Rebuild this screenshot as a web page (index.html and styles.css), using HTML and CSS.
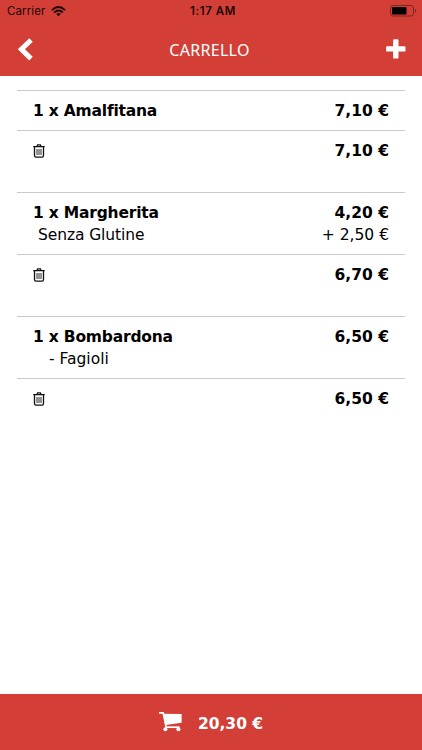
FILE: index.html
```html
<!DOCTYPE html>
<html lang="it">
<head>
    <meta charset="UTF-8">
    <meta name="viewport" content="width=device-width, initial-scale=1.0">
    <title>Carrello</title>
    <link rel="stylesheet" href="styles.css">
</head>
<body>

    <!-- Trash icon, used once per cart item -->
    <svg class="sprite" width="0" height="0">
        <symbol id="trash" viewBox="0 0 12 14">
            <path d="M0.3 2.6H11.7M3.9 2.4L4.6 0.8H7.4L8.1 2.4" fill="none" stroke="#111" stroke-width="1.3"/>
            <path d="M1.5 3V11.6Q1.5 13.2 3 13.2H9Q10.5 13.2 10.5 11.6V3" fill="none" stroke="#111" stroke-width="1.3"/>
            <path d="M4 5V11M6 5V11M8 5V11" stroke="#111" stroke-width="0.9"/>
        </symbol>
    </svg>

    <header>
        <div class="status-bar">
            <div class="carrier">
                <span>Carrier</span>
                <svg width="15" height="11" viewBox="0 0 15 11" fill="none" stroke="#1c0605" stroke-width="1.9">
                    <path d="M0.9 4.1Q7.5 -1.9 14.1 4.1"/>
                    <path d="M3.2 6.5Q7.5 2.7 11.8 6.5"/>
                    <path d="M7.5 10.2L5.2 7.9Q7.5 6.2 9.8 7.9Z" fill="#1c0605" stroke="none"/>
                </svg>
            </div>
            <div class="time">1:17 AM</div>
            <svg class="battery" width="27" height="12" viewBox="0 0 27 12">
                <rect x="0.5" y="0.5" width="23" height="10.5" rx="2.5" fill="none" stroke="#7d2521"/>
                <rect x="2" y="2" width="14.5" height="7.5" rx="0.8" fill="#000"/>
                <path d="M25 4V7.8Q26.3 7.2 26.3 5.9T25 4Z" fill="#7d2521"/>
            </svg>
        </div>
        <div class="nav-bar">
            <button class="back">
                <svg width="15" height="23" viewBox="0 0 15 23">
                    <path d="M13 2L3.4 11.3L13 20.6" fill="none" stroke="#fff" stroke-width="5"/>
                </svg>
            </button>
            <h1>CARRELLO</h1>
            <button class="add">
                <svg width="20" height="20" viewBox="0 0 20 20" fill="#fff">
                    <rect x="7.1" y="0.2" width="5.4" height="19.4" rx="1.2"/>
                    <rect x="0.1" y="7.2" width="19.4" height="5.4" rx="1.2"/>
                </svg>
            </button>
        </div>
    </header>

    <main>
        <section class="item">
            <div class="details">
                <div class="row bold"><span class="name">1 x Amalfitana</span><span>7,10 €</span></div>
            </div>
            <div class="total row bold">
                <svg class="trash" width="12" height="14"><use href="#trash"/></svg>
                <span>7,10 €</span>
            </div>
        </section>

        <section class="item">
            <div class="details">
                <div class="row bold"><span class="name">1 x Margherita</span><span>4,20 €</span></div>
                <div class="row extra"><span class="variant">Senza Glutine</span><span>+ 2,50 €</span></div>
            </div>
            <div class="total row bold">
                <svg class="trash" width="12" height="14"><use href="#trash"/></svg>
                <span>6,70 €</span>
            </div>
        </section>

        <section class="item">
            <div class="details">
                <div class="row bold"><span class="name">1 x Bombardona</span><span>6,50 €</span></div>
                <div class="row extra"><span class="removed">- Fagioli</span></div>
            </div>
            <div class="total row bold">
                <svg class="trash" width="12" height="14"><use href="#trash"/></svg>
                <span>6,50 €</span>
            </div>
        </section>
    </main>

    <footer>
        <svg width="24" height="20" viewBox="0 0 24 20" fill="#fff">
            <path d="M0 0.9H4.2L7 14.6" fill="none" stroke="#fff" stroke-width="1.7"/>
            <path d="M4.6 1.7L22.6 2V10.8L6.6 13Z"/>
            <path d="M6.2 15.2H20.6" fill="none" stroke="#fff" stroke-width="1.7"/>
            <circle cx="6.4" cy="17.3" r="2"/>
            <circle cx="19.4" cy="17.3" r="2"/>
        </svg>
        <span>20,30 €</span>
    </footer>

</body>
</html>
```

FILE: styles.css
```css
/* General Styles */
* {
    box-sizing: border-box;
}

body {
    margin: 0;
    height: 100vh;
    display: flex;
    flex-direction: column;
    font-family: Verdana, 'DejaVu Sans', sans-serif;
    font-size: 15.5px;
    font-variant-ligatures: none;
    color: #000;
    background: #fff;
}

.sprite {
    display: none;
}

/* Header */
header {
    height: 76px;
    background: #d33f37;
}

.status-bar {
    display: grid;
    grid-template-columns: 1fr auto 1fr;
    align-items: center;
    height: 22px;
    padding: 0 5px 0 7px;
    font-family: Inter, sans-serif;
    font-size: 11.5px;
    color: #1c0605;
}

.carrier {
    display: flex;
    align-items: center;
    gap: 6px;
}

.carrier span {
    letter-spacing: 0.1px;
}

.time {
    padding-left: 2px;
    font-weight: 600;
    letter-spacing: 0.6px;
}

.battery {
    justify-self: end;
}

.nav-bar {
    display: flex;
    justify-content: space-between;
    align-items: center;
    height: 54px;
    padding: 0 16px 0 18px;
}

h1 {
    margin: 2px 0 0;
    font-family: 'Noto Sans', sans-serif;
    font-size: 16px;
    font-weight: 400;
    letter-spacing: 0.3px;
    color: #fff;
}

button {
    display: flex;
    padding: 0;
    border: none;
    background: none;
}

/* Cart items */
main {
    flex: 1;
    padding: 14px 17px 0;
}

.details,
.total {
    border-top: 1px solid #cbcbcb;
    padding: 9px 16px 8px;
}

.row {
    display: flex;
    justify-content: space-between;
    line-height: 22px;
}

.bold {
    font-weight: bold;
}

.name {
    letter-spacing: -0.2px;
}

.extra {
    height: 22px;
    line-height: 23px;
}

.total {
    height: 62px;
}

.trash {
    margin-top: 4px;
}

.variant {
    padding-left: 5px;
    letter-spacing: -0.1px;
}

.removed {
    padding-left: 16px;
}

/* Order total */
footer {
    display: flex;
    justify-content: center;
    align-items: center;
    gap: 15px;
    height: 56px;
    background: #d33f37;
    color: #fff;
    font-weight: bold;
}

footer svg {
    margin-bottom: 1px;
}

footer span {
    margin-top: 4px;
}
```
